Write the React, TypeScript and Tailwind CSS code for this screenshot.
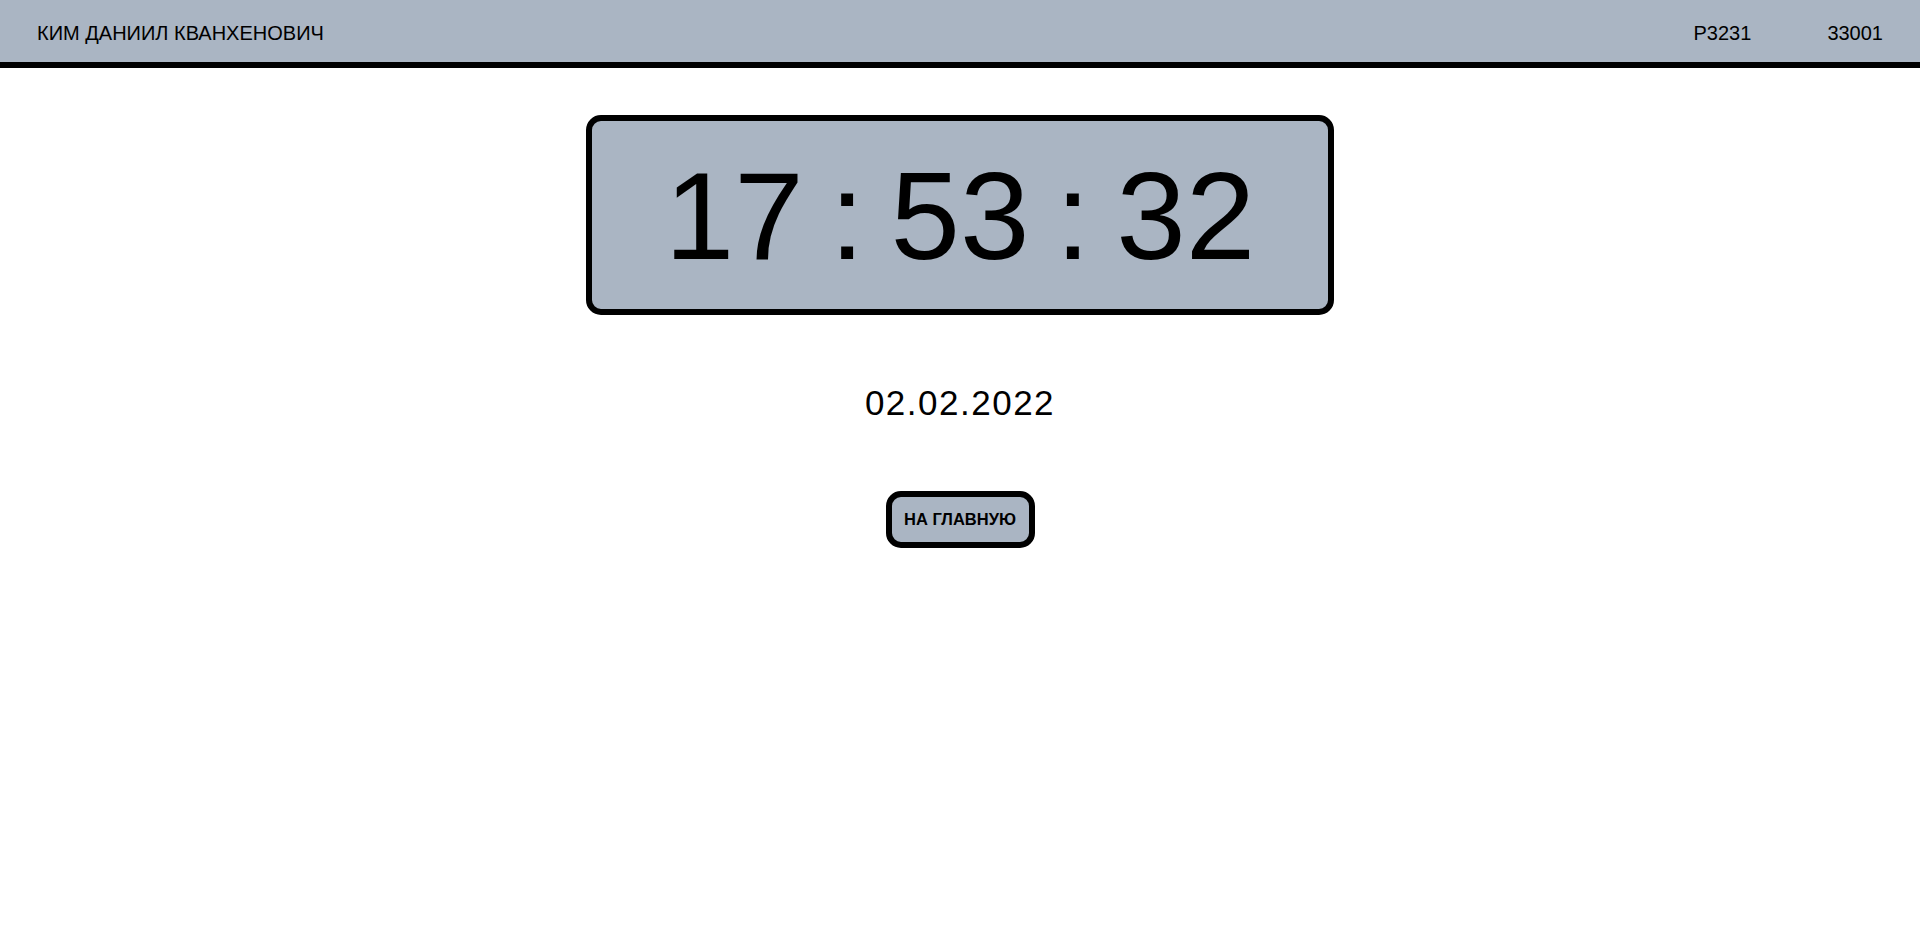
import React from "react";

export default function App() {
  const font = { fontFamily: '"Liberation Sans", Arial, sans-serif' };
  return (
    <div className="min-h-[930px] w-full bg-white text-black" style={font}>
      <header className="flex h-[68px] items-center justify-between border-b-[6px] border-black bg-[#aab5c3] pl-[37px] pr-[37px] pt-[3px] text-[20px]">
        <div>КИМ ДАНИИЛ КВАНХЕНОВИЧ</div>
        <div className="flex gap-[76px]">
          <span>P3231</span>
          <span>33001</span>
        </div>
      </header>

      <main className="flex flex-col items-center">
        <div className="mt-[47px] flex h-[200px] w-[748px] justify-center gap-[26px] rounded-[15px] border-[6px] border-black bg-[#aab5c3] pt-[32px] text-[125px] leading-[125px]">
          <span>17</span>
          <span>:</span>
          <span>53</span>
          <span>:</span>
          <span>32</span>
        </div>

        <div className="mt-[70px] text-[35px] leading-none tracking-[1.5px]">02.02.2022</div>

        <button className="mt-[71px] flex h-[57px] w-[149px] items-center justify-center rounded-[15px] border-[6px] border-black bg-[#aab5c3] text-[16.5px] font-bold leading-none">
          НА ГЛАВНУЮ
        </button>
      </main>
    </div>
  );
}
